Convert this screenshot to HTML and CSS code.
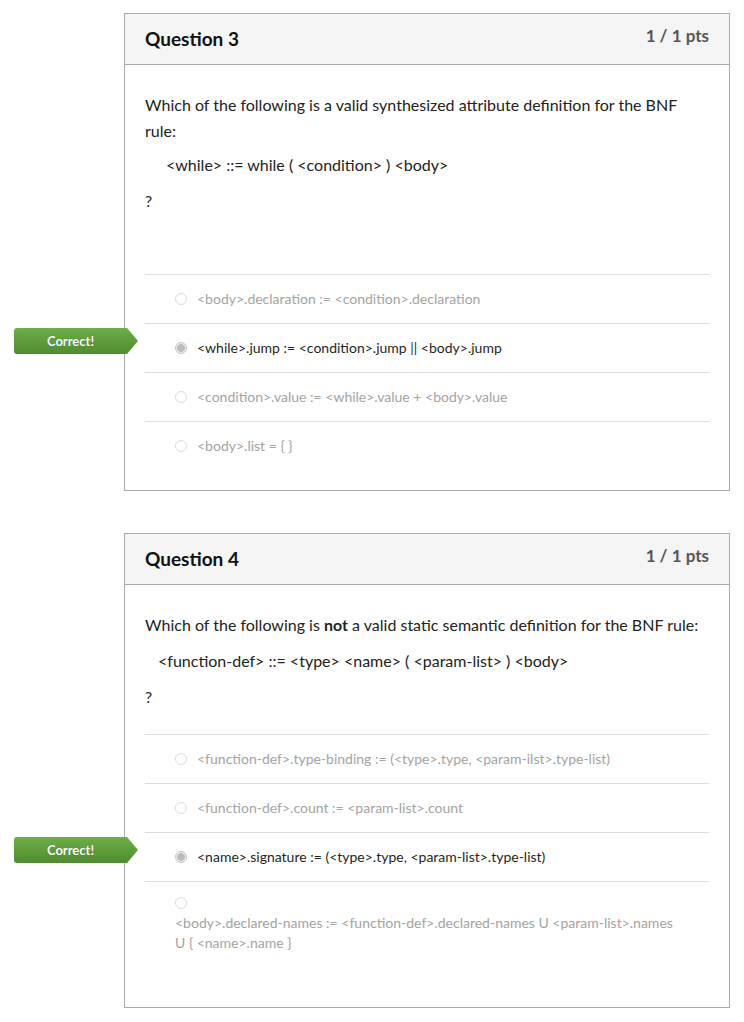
FILE: index.html
```html
<!DOCTYPE html>
<html lang="en">
<head>
<meta charset="utf-8">
<title>Quiz results</title>
<link rel="stylesheet" href="styles.css">
</head>
<body>
<div class="page">
  <section class="card">
    <header class="card-head">
      <h2 class="q-title">Question 3</h2>
      <div class="q-pts">1 / 1 pts</div>
    </header>
    <div class="card-body">
      <div class="q-text">
        <p class="lead-tight">Which of the following is a valid synthesized attribute definition for the BNF rule:</p>
        <p class="code code-wide">&lt;while&gt; ::= while ( &lt;condition&gt; ) &lt;body&gt;</p>
        <p>?</p>
        <p>&nbsp;</p>
      </div>
      <div class="answers">
        <div class="answer"><span class="radio"></span><span class="label">&lt;body&gt;.declaration := &lt;condition&gt;.declaration</span></div>
        <div class="answer answer--selected"><div class="badge">Correct!</div><span class="radio radio--on"></span><span class="label">&lt;while&gt;.jump := &lt;condition&gt;.jump || &lt;body&gt;.jump</span></div>
        <div class="answer"><span class="radio"></span><span class="label">&lt;condition&gt;.value := &lt;while&gt;.value + &lt;body&gt;.value</span></div>
        <div class="answer"><span class="radio"></span><span class="label">&lt;body&gt;.list = { }</span></div>
      </div>
    </div>
  </section>

  <section class="card">
    <header class="card-head">
      <h2 class="q-title">Question 4</h2>
      <div class="q-pts">1 / 1 pts</div>
    </header>
    <div class="card-body">
      <div class="q-text">
        <p>Which of the following is <strong>not</strong> a valid static semantic definition for the BNF rule:</p>
        <p class="code">&lt;function-def&gt; ::= &lt;type&gt; &lt;name&gt; ( &lt;param-list&gt; ) &lt;body&gt;</p>
        <p>?</p>
      </div>
      <div class="answers">
        <div class="answer"><span class="radio"></span><span class="label">&lt;function-def&gt;.type-binding := (&lt;type&gt;.type, &lt;param-ilst&gt;.type-list)</span></div>
        <div class="answer"><span class="radio"></span><span class="label">&lt;function-def&gt;.count := &lt;param-list&gt;.count</span></div>
        <div class="answer answer--selected"><div class="badge">Correct!</div><span class="radio radio--on"></span><span class="label">&lt;name&gt;.signature := (&lt;type&gt;.type, &lt;param-list&gt;.type-list)</span></div>
        <div class="answer answer--wrap"><span class="radio"></span><span class="label">&lt;body&gt;.declared-names := &lt;function-def&gt;.declared-names U &lt;param-list&gt;.names U { &lt;name&gt;.name }</span></div>
      </div>
    </div>
  </section>
</div>
</body>
</html>
```

FILE: styles.css
```css
* { box-sizing: border-box; }

body {
  margin: 8px;
  font-family: Lato, "Liberation Sans", sans-serif;
  color: #222;
  background: #fff;
}

.page {
  padding-left: 116px;
  padding-top: 5px;
  width: 722px;
}

.card {
  border: 1px solid #a9a9a9;
  margin-bottom: 42px;
}

.card-head {
  height: 51px;
  background: #f5f5f5;
  border-bottom: 1px solid #a9a9a9;
  display: flex;
  justify-content: space-between;
  align-items: flex-start;
  padding: 13px 20px 0 20px;
}

.q-title {
  margin: 0;
  font-size: 19px;
  line-height: 24px;
  font-weight: 700;
  color: #111;
}

.q-pts {
  font-size: 17px;
  line-height: 18px;
  font-weight: 700;
  color: #555;
}

.card-body {
  padding: 27px 20px 20px 20px;
}

.q-text {
  padding-bottom: 14px;
  font-size: 16px;
  line-height: 26px;
}

.q-text p {
  margin: 0 0 10px 0;
}

.q-text p.lead-tight {
  margin-bottom: 8px;
}

.q-text strong { font-weight: 700; }

.code { padding-left: 13px; }
.code-wide { padding-left: 21px; }

.answer {
  position: relative;
  border-top: 1px solid #dedede;
  padding: 13px 0 13px 30px;
  display: flex;
  align-items: center;
  font-size: 14px;
  line-height: 22px;
  color: #a3a3a3;
}

.answer--selected { color: #1f1f1f; }

.radio {
  flex: none;
  width: 12px;
  height: 12px;
  border-radius: 50%;
  border: 1px solid #dcdcdc;
  background: #fff;
  margin-right: 10px;
}

.radio--on {
  border-color: #c4c4c4;
  background: radial-gradient(circle, #bdbdbd 0 3.6px, #efefef 4.2px);
}

.answer--wrap {
  display: block;
  padding-bottom: 34px;
}

.answer--wrap .radio {
  display: block;
  margin: 2px 0 0 0;
}

.answer--wrap .label {
  display: block;
  max-width: 506px;
  line-height: 20px;
  margin-top: 4px;
}

.badge {
  position: absolute;
  left: -131px;
  top: 4px;
  width: 124px;
  height: 26px;
  padding-right: 11px;
  border-radius: 3px 0 0 3px;
  clip-path: polygon(0 0, calc(100% - 11px) 0, 100% 50%, calc(100% - 11px) 100%, 0 100%);
  background: linear-gradient(#6cae48, #4f8d30);
  color: #fff;
  font-size: 13px;
  font-weight: 700;
  line-height: 26px;
  text-align: center;
  text-shadow: 0 0 1px rgba(0,0,0,0.35);
}
```
